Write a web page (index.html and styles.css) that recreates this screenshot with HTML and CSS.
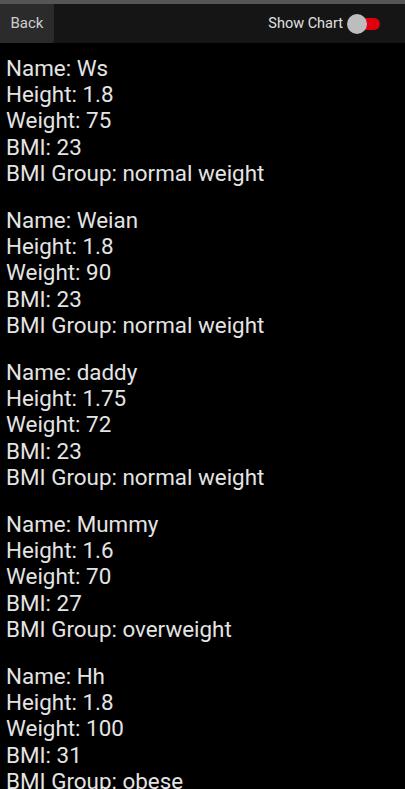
FILE: index.html
```html
<!DOCTYPE html>
<html>
<head>
<meta charset="utf-8">
<link rel="stylesheet" href="styles.css">
</head>
<body>
<div class="statusbar"></div>
<header class="topbar">
  <button class="back">Back</button>
  <div class="toggle-wrap">
    <span class="toggle-label">Show Chart</span>
    <span class="switch"><span class="track"></span><span class="thumb"></span></span>
  </div>
</header>
<main class="list">
  <div class="entry">
    <div>Name: Ws</div><div>Height: 1.8</div><div>Weight: 75</div><div>BMI: 23</div><div>BMI Group: normal weight</div>
  </div>
  <div class="entry">
    <div>Name: Weian</div><div>Height: 1.8</div><div>Weight: 90</div><div>BMI: 23</div><div>BMI Group: normal weight</div>
  </div>
  <div class="entry">
    <div>Name: daddy</div><div>Height: 1.75</div><div>Weight: 72</div><div>BMI: 23</div><div>BMI Group: normal weight</div>
  </div>
  <div class="entry">
    <div>Name: Mummy</div><div>Height: 1.6</div><div>Weight: 70</div><div>BMI: 27</div><div>BMI Group: overweight</div>
  </div>
  <div class="entry">
    <div>Name: Hh</div><div>Height: 1.8</div><div>Weight: 100</div><div>BMI: 31</div><div>BMI Group: obese</div>
  </div>
</main>
</body>
</html>
```
FILE: styles.css
```css
html, body {
  margin: 0;
  padding: 0;
  background: #000;
  height: 789px;
  overflow: hidden;
  font-family: Roboto, "Noto Sans", sans-serif;
}
.statusbar {
  height: 4px;
  background: #555;
}
.topbar {
  height: 39px;
  background: #151515;
  display: flex;
  align-items: stretch;
  justify-content: space-between;
}
.back {
  width: 54px;
  border: none;
  margin: 0;
  padding: 0 0 2px 0;
  background: #2b2b2b;
  border-radius: 0 0 3px 0;
  color: #cfcfcf;
  font-family: Roboto, sans-serif;
  font-size: 15px;
  text-align: center;
}
.toggle-wrap {
  display: flex;
  align-items: center;
  gap: 4px;
  padding-right: 25px;
}
.toggle-label {
  color: #e0e0e0;
  font-size: 14.5px;
}
.switch {
  position: relative;
  width: 33px;
  height: 20px;
}
.track {
  position: absolute;
  left: 4px;
  right: 0;
  top: 4px;
  height: 12px;
  border-radius: 6px;
  background: #e3000e;
}
.thumb {
  position: absolute;
  left: 0;
  top: 0;
  width: 20px;
  height: 20px;
  border-radius: 50%;
  background: #bdbdbd;
}
.list {
  padding: 12px 6px 0;
  color: #e4e4e4;
  font-size: 22.4px;
  line-height: 26.2px;
}
.entry {
  margin-bottom: 21px;
}
```
